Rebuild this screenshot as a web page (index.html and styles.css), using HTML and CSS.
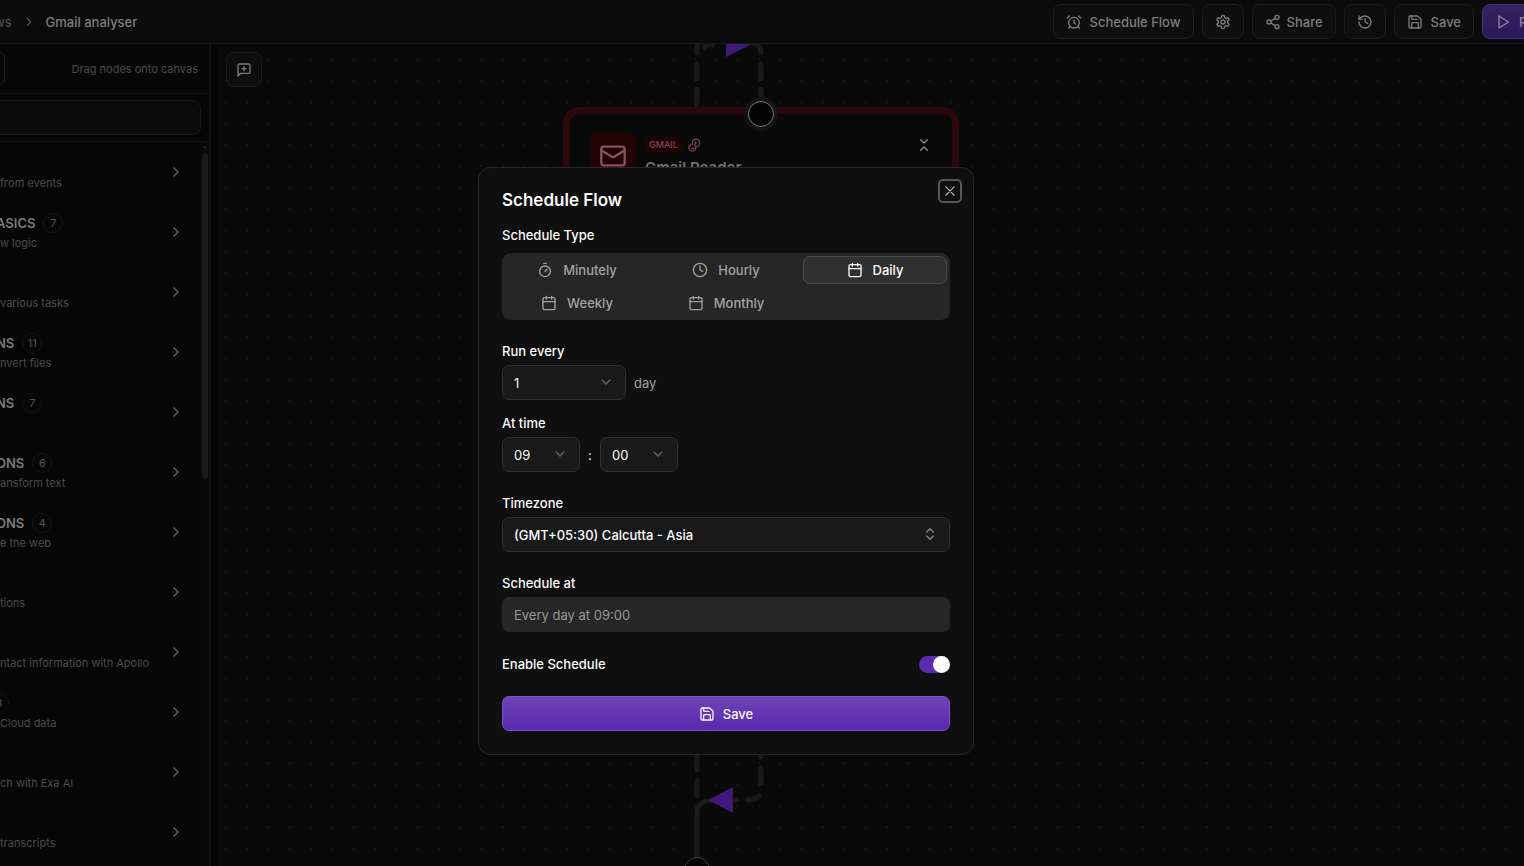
FILE: index.html
```html
<!DOCTYPE html>
<html lang="en">
<head>
  <meta charset="UTF-8" />
  <meta name="viewport" content="width=device-width, initial-scale=1.0" />
  <title>Gmail analyser</title>
  <link rel="stylesheet" href="styles.css">
</head>
<body>
  <!-- shared icons -->
  <svg class="sprite" aria-hidden="true">
    <symbol id="chevron-right" viewBox="0 0 24 24"><path d="m9 18 6-6-6-6" /></symbol>
    <symbol id="chevron-down" viewBox="0 0 24 24"><path d="m6 9 6 6 6-6" /></symbol>
    <symbol id="calendar" viewBox="0 0 24 24">
      <path d="M8 2v4M16 2v4M3 10h18" /><rect x="3" y="4" width="18" height="18" rx="2" />
    </symbol>
    <symbol id="save" viewBox="0 0 24 24">
      <path d="M15.2 3a2 2 0 0 1 1.4.6l3.8 3.8a2 2 0 0 1 .6 1.4V19a2 2 0 0 1-2 2H5a2 2 0 0 1-2-2V5a2 2 0 0 1 2-2z" />
      <path d="M17 21v-7a1 1 0 0 0-1-1H8a1 1 0 0 0-1 1v7M7 3v4a1 1 0 0 0 1 1h7" />
    </symbol>
  </svg>

  <header class="topbar">
    <nav class="breadcrumb">
      <a href="#">ws</a>
      <svg class="icon small"><use href="#chevron-right" /></svg>
      <span class="current">Gmail analyser</span>
    </nav>
    <div class="actions">
      <button class="btn">
        <svg class="icon" viewBox="0 0 24 24"><circle cx="12" cy="13" r="8" /><path d="M12 9v4l2 2M5 3 2 6M22 6l-3-3M6.38 18.7 4 21M17.64 18.67 20 21" /></svg>
        Schedule Flow
      </button>
      <button class="btn" aria-label="Settings">
        <svg class="icon" viewBox="0 0 24 24"><path d="M12.22 2h-.44a2 2 0 0 0-2 2v.18a2 2 0 0 1-1 1.73l-.43.25a2 2 0 0 1-2 0l-.15-.08a2 2 0 0 0-2.73.73l-.22.38a2 2 0 0 0 .73 2.73l.15.1a2 2 0 0 1 1 1.72v.51a2 2 0 0 1-1 1.74l-.15.09a2 2 0 0 0-.73 2.73l.22.38a2 2 0 0 0 2.73.73l.15-.08a2 2 0 0 1 2 0l.43.25a2 2 0 0 1 1 1.73V20a2 2 0 0 0 2 2h.44a2 2 0 0 0 2-2v-.18a2 2 0 0 1 1-1.73l.43-.25a2 2 0 0 1 2 0l.15.08a2 2 0 0 0 2.73-.73l.22-.39a2 2 0 0 0-.73-2.73l-.15-.08a2 2 0 0 1-1-1.74v-.5a2 2 0 0 1 1-1.74l.15-.09a2 2 0 0 0 .73-2.73l-.22-.38a2 2 0 0 0-2.73-.73l-.15.08a2 2 0 0 1-2 0l-.43-.25a2 2 0 0 1-1-1.73V4a2 2 0 0 0-2-2z" /><circle cx="12" cy="12" r="3" /></svg>
      </button>
      <button class="btn share">
        <svg class="icon" viewBox="0 0 24 24"><circle cx="18" cy="5" r="3" /><circle cx="6" cy="12" r="3" /><circle cx="18" cy="19" r="3" /><path d="m8.59 13.51 6.83 3.98M15.41 6.51l-6.82 3.98" /></svg>
        Share
      </button>
      <button class="btn" aria-label="History">
        <svg class="icon" viewBox="0 0 24 24"><path d="M3 12a9 9 0 1 0 9-9 9.75 9.75 0 0 0-6.74 2.74L3 8" /><path d="M3 3v5h5M12 7v5l4 2" /></svg>
      </button>
      <button class="btn">
        <svg class="icon"><use href="#save" /></svg>
        Save
      </button>
      <button class="btn run">
        <svg class="icon" viewBox="0 0 24 24"><path d="m6 3 14 9-14 9z" /></svg>
        Run
      </button>
    </div>
  </header>

  <div class="workspace">
    <aside class="sidebar">
      <div class="sidebar-head">
        <button class="btn tab" aria-label="Nodes"></button>
        <span>Drag nodes onto canvas</span>
      </div>
      <div class="search">
        <input type="text" aria-label="Search nodes" />
      </div>
      <div class="list-wrap">
        <ul class="node-list">
          <li><div><h3></h3><p>from events</p></div><svg class="icon"><use href="#chevron-right" /></svg></li>
          <li><div><h3>ASICS <span class="count">7</span></h3><p>w logic</p></div><svg class="icon"><use href="#chevron-right" /></svg></li>
          <li><div><h3></h3><p>various tasks</p></div><svg class="icon"><use href="#chevron-right" /></svg></li>
          <li><div><h3>NS <span class="count">11</span></h3><p>nvert files</p></div><svg class="icon"><use href="#chevron-right" /></svg></li>
          <li><div><h3>NS <span class="count">7</span></h3><p></p></div><svg class="icon"><use href="#chevron-right" /></svg></li>
          <li><div><h3>ONS <span class="count">6</span></h3><p>ansform text</p></div><svg class="icon"><use href="#chevron-right" /></svg></li>
          <li><div><h3>ONS <span class="count">4</span></h3><p>e the web</p></div><svg class="icon"><use href="#chevron-right" /></svg></li>
          <li><div><h3></h3><p>tions</p></div><svg class="icon"><use href="#chevron-right" /></svg></li>
          <li><div><h3></h3><p>ntact information with Apollo</p></div><svg class="icon"><use href="#chevron-right" /></svg></li>
          <li><div><h3 class="cut"><span class="count">3</span></h3><p>Cloud data</p></div><svg class="icon"><use href="#chevron-right" /></svg></li>
          <li><div><h3></h3><p>ch with Exa AI</p></div><svg class="icon"><use href="#chevron-right" /></svg></li>
          <li><div><h3></h3><p>transcripts</p></div><svg class="icon"><use href="#chevron-right" /></svg></li>
        </ul>
        <div class="scrollbar">
          <span class="arrow"></span>
          <span class="thumb"></span>
        </div>
      </div>
    </aside>

    <main class="canvas">
      <svg class="edges" aria-hidden="true">
        <defs>
          <pattern id="dots" x="20" y="40" width="64" height="64" patternUnits="userSpaceOnUse" patternTransform="scale(.3333)">
            <circle cx="6" cy="6" r="2.4" />
          </pattern>
        </defs>
        <rect width="100%" height="100%" fill="url(#dots)" />
        <g class="edge">
          <path d="M480 0V9M480 20V35M480 45V61" />
          <path d="M487 3Q490 0 496 1M537 -1Q544 2 544 9M544 20V35M544 45V61" />
          <path d="M480 705V726M480 737V752M544 705V713M544 724V739M542 752Q539 756 530 756M518 756H520" />
          <path d="M480 815V768Q480 757 495 756" />
        </g>
        <g class="arrowhead">
          <path d="M509 -13 535 0 509 13z" />
          <path d="M516 743 491 756 516 769z" />
        </g>
      </svg>

      <button class="btn comment" aria-label="Add comment">
        <svg class="icon" viewBox="0 0 24 24"><path d="M21 15a2 2 0 0 1-2 2H7l-4 4V5a2 2 0 0 1 2-2h14a2 2 0 0 1 2 2zM12 7v6M9 10h6" /></svg>
      </button>

      <article class="node">
        <div class="node-icon">
          <svg class="icon" viewBox="0 0 24 24"><rect x="2" y="4" width="20" height="16" rx="2" /><path d="m22 7-8.97 5.7a1.94 1.94 0 0 1-2.06 0L2 7" /></svg>
        </div>
        <div class="node-text">
          <div class="node-meta">
            <span class="tag">GMAIL</span>
            <svg class="icon" viewBox="0 0 24 24"><path d="M10 12a6.500 6.500 0 1 1 5 3M15 6v4h-2" /><path d="M13 12a6 6 0 1 1-6-1M12 17a3 3 0 0 1-4 1" /></svg>
          </div>
          <h2>Gmail Reader</h2>
        </div>
        <svg class="icon collapse" viewBox="0 0 24 24"><path d="m7 20 5-5 5 5M7 4l5 5 5-5" /></svg>
      </article>
      <span class="handle top"></span>
      <span class="handle bottom"></span>
    </main>
  </div>

  <div class="overlay">
    <form class="modal" role="dialog" aria-labelledby="modalTitle">
      <button type="button" class="close" aria-label="Close">
        <svg class="icon" viewBox="0 0 24 24"><path d="M19 5 5 19M5 5l14 14" /></svg>
      </button>
      <h1 id="modalTitle">Schedule Flow</h1>

      <section class="type">
        <h4 id="typeLabel">Schedule Type</h4>
        <div class="tabs" role="tablist" aria-labelledby="typeLabel">
          <button type="button" role="tab">
            <svg class="icon" viewBox="0 0 24 24"><path d="M10 2h4M12 14l3-3" /><circle cx="12" cy="14" r="8" /></svg>Minutely
          </button>
          <button type="button" role="tab">
            <svg class="icon" viewBox="0 0 24 24"><circle cx="12" cy="12" r="10" /><path d="M12 6v6l4 2" /></svg>Hourly
          </button>
          <button type="button" role="tab" class="active" aria-selected="true">
            <svg class="icon"><use href="#calendar" /></svg>Daily
          </button>
          <button type="button" role="tab">
            <svg class="icon"><use href="#calendar" /></svg>Weekly
          </button>
          <button type="button" role="tab">
            <svg class="icon"><use href="#calendar" /></svg>Monthly
          </button>
        </div>
      </section>

      <section class="timing">
        <div class="field">
          <label for="interval">Run every</label>
          <div class="row">
            <div class="select wide">
              <select id="interval"><option>1</option></select>
              <svg class="icon"><use href="#chevron-down" /></svg>
            </div>
            <span class="unit">day</span>
          </div>
        </div>
        <div class="field">
          <label for="hour">At time</label>
          <div class="row">
            <div class="select">
              <select id="hour"><option>09</option></select>
              <svg class="icon"><use href="#chevron-down" /></svg>
            </div>
            <span class="colon">:</span>
            <div class="select">
              <select id="minute" aria-label="Minute"><option>00</option></select>
              <svg class="icon"><use href="#chevron-down" /></svg>
            </div>
          </div>
        </div>
      </section>

      <div class="field">
        <label for="timezone">Timezone</label>
        <div class="select full">
          <select id="timezone"><option>(GMT+05:30) Calcutta - Asia</option></select>
          <svg class="icon" viewBox="0 0 24 24"><path d="m7 15 5 5 5-5M7 9l5-5 5 5" /></svg>
        </div>
      </div>

      <div class="field">
        <label for="summary">Schedule at</label>
        <input type="text" id="summary" value="Every day at 09:00" readonly />
      </div>

      <div class="enable">
        <label for="enabled">Enable Schedule</label>
        <input type="checkbox" id="enabled" class="switch" role="switch" checked />
      </div>

      <button type="submit" class="submit">
        <svg class="icon"><use href="#save" /></svg>
        Save
      </button>
    </form>
  </div>
</body>
</html>
```
FILE: styles.css
```css
:root {
  --bar: #0b0b0b;
  --panel: #060606;
  --canvas: #090909;
  --modal: #0f0f0f;
  --line: #171717;
  --dim: #4b4b4b;
  --muted: #a1a1a1;
  --text: #fafafa;
  --purple: #5b2bb0;
}

* {
  box-sizing: border-box;
  margin: 0;
  padding: 0;
}

body {
  display: flex;
  flex-direction: column;
  height: 100vh;
  overflow: hidden;
  background: var(--canvas);
  color: var(--text);
  font-family: Inter, 'Liberation Sans', sans-serif;
  font-size: 13px;
  line-height: 20px;
}

button,
input,
select {
  font: inherit;
  color: inherit;
}

.sprite {
  position: absolute;
  width: 0;
  height: 0;
}

.icon {
  width: 16px;
  height: 16px;
  flex: none;
  fill: none;
  stroke: currentColor;
  stroke-width: 2;
  stroke-linecap: round;
  stroke-linejoin: round;
}

.icon.small {
  width: 14px;
  height: 14px;
}

/* top bar */
.topbar {
  display: flex;
  flex: none;
  align-items: center;
  justify-content: space-between;
  height: 44px;
  border-bottom: 1px solid var(--line);
  background: var(--bar);
  overflow: hidden;
}

.breadcrumb {
  display: flex;
  align-items: center;
  gap: 10px;
  margin-left: -6px;
  color: #555;
}

.breadcrumb a {
  color: inherit;
  text-decoration: none;
}

.breadcrumb .current {
  color: #7d7d7d;
  font-weight: 500;
}

.actions {
  display: flex;
  gap: 8px;
  margin-right: -38px;
}

.btn {
  display: flex;
  align-items: center;
  gap: 8px;
  height: 35px;
  padding: 0 12px;
  border: 1px solid #1d1d1d;
  border-radius: 8px;
  background: #0e0e0e;
  color: #7d7d7d;
  font-weight: 500;
  white-space: nowrap;
}

.btn.share {
  gap: 6px;
}

.btn.run {
  width: 80px;
  border-color: #41307a;
  background: linear-gradient(#35225c, #2e165a);
  color: #8f85a3;
}

/* sidebar */
.workspace {
  display: flex;
  flex: 1;
  min-height: 0;
  gap: 6px;
  background: #050505;
}

.sidebar {
  display: flex;
  flex-direction: column;
  flex: none;
  width: 211px;
  border-right: 2px solid #101010;
  background: var(--panel);
  overflow: hidden;
}

.sidebar-head {
  display: flex;
  flex: none;
  align-items: center;
  justify-content: space-between;
  height: 50px;
  padding-right: 11px;
  border-bottom: 1px solid #111;
  color: var(--dim);
  font-size: 11px;
}

.tab {
  width: 35px;
  margin-left: -30px;
  background: none;
}

.search {
  padding: 6px 8px 6px 0;
  border-bottom: 1px solid #111;
}

.search input {
  width: calc(100% + 10px);
  height: 35px;
  margin-left: -10px;
  padding: 0 12px;
  border: 1px solid #1a1a1a;
  border-radius: 8px;
  background: #0b0b0b;
}

.list-wrap {
  display: flex;
  flex: 1;
  min-height: 0;
}

.node-list {
  flex: 1;
  list-style: none;
}

.node-list li {
  display: flex;
  align-items: center;
  justify-content: space-between;
  height: 60px;
  padding-right: 16px;
  white-space: nowrap;
}

.node-list .icon {
  color: #666;
}

.node-list h3 {
  display: flex;
  align-items: center;
  gap: 8px;
  height: 20px;
  margin-left: -4px;
  color: #7a7a7a;
  font-size: 13px;
  font-weight: 600;
}

.node-list h3.cut {
  margin-left: -11px;
}

.node-list p {
  height: 18px;
  color: var(--dim);
  font-size: 11px;
  line-height: 20px;
}

.count {
  min-width: 20px;
  height: 20px;
  border: 1px solid #151515;
  border-radius: 10px;
  color: #555;
  font-size: 11px;
  font-weight: 400;
  line-height: 18px;
  text-align: center;
}

.scrollbar {
  display: flex;
  flex-direction: column;
  align-items: center;
  width: 9px;
  background: #090909;
}

.scrollbar .arrow {
  margin: 4px 0 5px;
  border: 2px solid transparent;
  border-top: 0;
  border-bottom-color: #222;
}

.scrollbar .thumb {
  width: 6px;
  height: 45%;
  border-radius: 3px;
  background: #1a1a1a;
}

/* canvas */
.canvas {
  position: relative;
  flex: 1;
  background: var(--canvas);
  overflow: hidden;
}

.edges {
  position: absolute;
  inset: 0;
  width: 100%;
  height: 100%;
}

.edges circle {
  fill: #242424;
}

.edge {
  fill: none;
  stroke: #1a1a1a;
  stroke-width: 5;
  stroke-linecap: round;
}

.arrowhead {
  fill: #3d1a78;
}

.comment {
  position: absolute;
  top: 8px;
  left: 9px;
  padding: 0 9px;
}

.node {
  position: absolute;
  top: 63px;
  left: 346px;
  display: flex;
  align-items: flex-start;
  width: 396px;
  height: 420px;
  padding: 19px 20px;
  border: 7px solid #2a080b;
  border-radius: 16px;
  background: var(--canvas);
}

.node-icon {
  display: grid;
  place-items: center;
  width: 46px;
  height: 46px;
  border-radius: 8px;
  background: #210305;
  color: #895055;
}

.node-icon .icon {
  width: 28px;
  height: 28px;
}

.node-text {
  flex: 1;
  margin-left: 9px;
}

.node-meta {
  display: flex;
  align-items: center;
  gap: 5px;
  height: 24px;
  color: #784b4e;
}

.node-meta .icon {
  width: 14px;
  height: 14px;
}

.tag {
  padding: 0 4px;
  border-radius: 6px;
  background: #210305;
  font-size: 9px;
  font-weight: 500;
  line-height: 16px;
}

.node h2 {
  color: #707070;
  font-size: 15px;
  font-weight: 600;
  line-height: 22px;
}

.collapse {
  margin: 4px 0;
  color: #888;
}

.handle {
  position: absolute;
  width: 26px;
  height: 26px;
  border: 1px solid #777;
  border-radius: 50%;
  background: #030303;
}

.handle.top {
  top: 57px;
  left: 531px;
  box-shadow: 0 0 0 4px #141414;
}

.handle.bottom {
  top: 813px;
  left: 467px;
  border-color: #444;
}

/* schedule dialog */
.overlay {
  position: fixed;
  inset: 0;
  display: flex;
  align-items: center;
  justify-content: center;
  padding: 56px 72px 0 0;
}

.modal {
  position: relative;
  display: flex;
  flex-direction: column;
  gap: 21px;
  width: 496px;
  max-width: 100%;
  padding: 23px;
  border: 1px solid #272727;
  border-radius: 12px;
  background: var(--modal);
}

.modal h1 {
  margin-bottom: -5px;
  font-size: 17px;
  font-weight: 600;
  line-height: 18px;
}

.modal h4,
.modal label {
  font-size: 13px;
  font-weight: 500;
}

.close {
  position: absolute;
  top: 11px;
  right: 11px;
  display: grid;
  place-items: center;
  width: 24px;
  height: 24px;
  border: 2px solid #585858;
  border-radius: 5px;
  background: none;
  color: #c4c4c4;
}

.close .icon {
  width: 14px;
  height: 14px;
}

.type,
.field {
  display: flex;
  flex-direction: column;
}

.type {
  gap: 8px;
}

.field {
  gap: 4px;
}

.timing {
  display: flex;
  flex-direction: column;
  gap: 13px;
}

.tabs {
  display: grid;
  grid-template-columns: repeat(3, 1fr);
  gap: 5px;
  padding: 3px;
  border-radius: 9px;
  background: #262626;
}

.tabs button {
  display: flex;
  align-items: center;
  justify-content: center;
  gap: 10px;
  height: 28px;
  border: 1px solid transparent;
  border-radius: 7px;
  background: none;
  color: var(--muted);
  font-weight: 500;
}

.tabs .active {
  border-color: #4b4b4b;
  background: #303030;
  color: var(--text);
}

.row {
  display: flex;
  align-items: center;
  gap: 8px;
}

.select {
  position: relative;
  width: 78px;
}

.select.wide {
  width: 124px;
}

.select.full {
  width: 100%;
}

.select select {
  display: block;
  width: 100%;
  height: 35px;
  padding: 0 11px;
  border: 1px solid #303030;
  border-radius: 7px;
  background: #191919;
  appearance: none;
}

.select .icon {
  position: absolute;
  top: 9px;
  right: 12px;
  color: #666;
  pointer-events: none;
}

.select.full select {
  font-weight: 500;
}

.select.full .icon {
  color: #858585;
}

.unit {
  color: var(--muted);
}

.colon {
  width: 4px;
}

.field input {
  width: 100%;
  height: 35px;
  padding: 0 12px;
  border: 0;
  border-radius: 7px;
  background: #262626;
  color: #979797;
}

.enable {
  display: flex;
  align-items: center;
  justify-content: space-between;
  height: 22px;
}

.switch {
  display: flex;
  justify-content: flex-end;
  width: 31px;
  height: 17px;
  border-radius: 9px;
  background: var(--purple);
  appearance: none;
}

.switch::before {
  content: '';
  width: 17px;
  height: 17px;
  border-radius: 50%;
  background: #fff;
}

.submit {
  display: flex;
  align-items: center;
  justify-content: center;
  gap: 8px;
  height: 35px;
  border: 1px solid #7a52c7;
  border-radius: 7px;
  background: linear-gradient(#6c43b5, #5b28b0);
  font-weight: 500;
}
```
